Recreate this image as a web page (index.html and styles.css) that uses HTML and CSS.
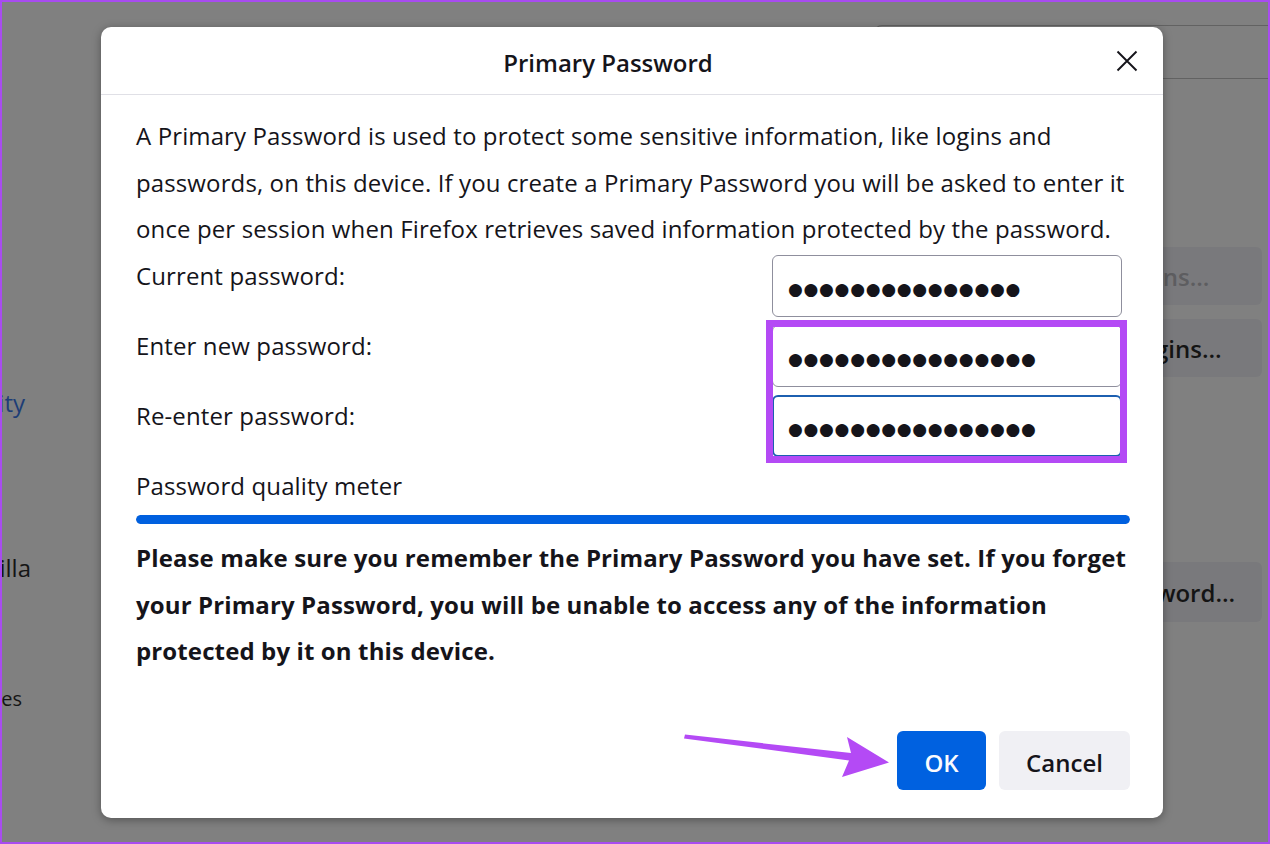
FILE: index.html
```html
<!DOCTYPE html>
<html lang="en">
<head>
<meta charset="utf-8">
<title>Primary Password</title>
<link rel="stylesheet" href="styles.css">
</head>
<body>
<div class="frame">
  <div class="page">
    <nav class="sidebar">
      <div class="nav-item nav-active">Privacy &amp; Security</div>
      <div class="nav-item nav-more">More from Mozilla</div>
      <div class="nav-item nav-footer">Extensions &amp; Themes</div>
    </nav>
    <main class="main">
      <div class="search"></div>
      <div class="btn-stack">
        <div class="bg-btn bg-btn-disabled">Exceptions…</div>
        <div class="bg-btn">Saved Logins…</div>
      </div>
      <div class="bg-btn bg-btn-wide"><span class="bg-btn-text">Change Primary Password…</span></div>
    </main>
  </div>

  <div class="dialog">
    <div class="dlg-header">
      <div class="dlg-title">Primary Password</div>
      <div class="close">
        <svg width="24" height="24" viewBox="0 0 24 24"><path d="M2.5 2.5 L21.5 21.5 M21.5 2.5 L2.5 21.5" stroke="#15141a" stroke-width="1.9" fill="none"/></svg>
      </div>
    </div>
    <div class="dlg-body">
      <p class="intro">A Primary Password is used to protect some sensitive information, like logins and passwords, on this device. If you create a Primary Password you will be asked to enter it once per session when Firefox retrieves saved information protected by the password.</p>
      <div class="fields">
        <div class="label">Current password:</div>
        <div class="field">●●●●●●●●●●●●●●●</div>
        <div class="label">Enter new password:</div>
        <div class="field">●●●●●●●●●●●●●●●●</div>
        <div class="label">Re-enter password:</div>
        <div class="field field-focus">●●●●●●●●●●●●●●●●</div>
      </div>
      <div class="label">Password quality meter</div>
      <div class="meter"><div class="meter-fill" style="width:100%"></div></div>
      <p class="warning">Please make sure you remember the Primary Password you have set. If you forget your Primary Password, you will be unable to access any of the information protected by it on this device.</p>
    </div>
    <div class="dlg-footer">
      <button class="btn btn-primary">OK</button>
      <button class="btn btn-secondary">Cancel</button>
    </div>
  </div>

  <div class="highlight"></div>
  <svg class="arrow" width="220" height="60" viewBox="680 725 220 60">
    <polygon points="685,734.6 851,753 847,737 889,762.5 842,777 849,760.5 684,738.4" fill="#b44af5"/>
  </svg>
</div>
</body>
</html>
```

FILE: styles.css
```css
html, body {
  margin: 0;
  padding: 0;
}

body {
  font-family: "Open Sans", "Noto Sans", sans-serif;
  background: #808080;
}

.frame {
  position: relative;
  width: 1270px;
  height: 844px;
  box-sizing: border-box;
  border: 2px solid #a84cf0;
  background: #808080;
  overflow: hidden;
}

.page {
  display: flex;
  height: 100%;
}

/* background sidebar (dimmed) */
.sidebar {
  width: 29px;
  overflow: hidden;
  display: flex;
  flex-direction: column;
  flex-shrink: 0;
}

.nav-item {
  display: flex;
  justify-content: flex-end;
  white-space: nowrap;
  font-size: 24px;
  line-height: 46px;
  color: #151515;
}

.nav-active {
  margin-top: 378px;
  padding-right: 6px;
  color: #1d3d76;
}

.nav-more {
  margin-top: 119px;
}

.nav-footer {
  margin-top: 93px;
  font-size: 20px;
  line-height: 30px;
  padding-right: 9px;
}

/* background main area */
.main {
  flex: 1;
  display: flex;
  flex-direction: column;
  align-items: flex-end;
}

.search {
  margin-top: 23px;
  width: 394px;
  height: 54px;
  box-sizing: border-box;
  border: 1px solid #626262;
  border-right: none;
  border-radius: 8px 0 0 8px;
}

.btn-stack {
  margin-top: 168px;
  margin-right: 6px;
  width: 250px;
  display: flex;
  flex-direction: column;
  gap: 14px;
}

.bg-btn {
  height: 58px;
  border-radius: 6px;
  background: #79797c;
  color: #141414;
  font-size: 24px;
  font-weight: 600;
  display: flex;
  align-items: center;
  justify-content: center;
  white-space: nowrap;
}

.bg-btn-disabled {
  color: #5d5d60;
}

.bg-btn-wide {
  margin-top: 185px;
  margin-right: 6px;
  height: 60px;
  width: 110px;
  overflow: hidden;
  justify-content: flex-end;
  padding-right: 27px;
}

.bg-btn-text {
  flex-shrink: 0;
}

/* dialog */
.dialog {
  position: absolute;
  left: 99px;
  top: 25px;
  width: 1062px;
  height: 791px;
  background: #fff;
  border-radius: 10px;
  box-shadow: 0 2px 10px rgba(0, 0, 0, 0.35);
  display: flex;
  flex-direction: column;
  color: #15141a;
}

.dlg-header {
  height: 68px;
  box-sizing: border-box;
  border-bottom: 1px solid #e0e0e6;
  display: flex;
  align-items: center;
  padding: 4px 24px 0 0;
}

.dlg-title {
  flex: 1;
  text-align: center;
  font-size: 24px;
  font-weight: 600;
}

.close {
  width: 24px;
  height: 24px;
  margin-bottom: 4px;
}

.close svg {
  display: block;
}

.dlg-body {
  flex: 1;
  padding: 18px 33px 0 35px;
  font-size: 24px;
  line-height: 46.5px;
  letter-spacing: 0.12px;
}

.intro,
.warning {
  margin: 0;
}

.fields {
  display: grid;
  grid-template-columns: 1fr 350px;
  grid-auto-rows: 70px;
  margin-right: 8px;
}

.field {
  box-sizing: border-box;
  height: 62px;
  margin-top: 2px;
  border: 1px solid #8f8f9d;
  border-radius: 6px;
  padding-left: 15px;
  display: flex;
  align-items: center;
  padding-top: 7px;
  font-family: "DejaVu Sans", sans-serif;
  font-size: 17px;
  letter-spacing: 0.7px;
  color: #15141a;
}

.field-focus {
  border: 2px solid #1c5fb0;
  padding-left: 14px;
}

.meter {
  margin-top: 6px;
  height: 9px;
  border-radius: 5px;
  background: #e0e0e6;
  overflow: hidden;
}

.meter-fill {
  height: 100%;
  background: #0060df;
  border-radius: 5px;
}

.warning {
  margin-top: 11px;
  font-weight: 700;
}

.dlg-footer {
  display: flex;
  justify-content: flex-end;
  gap: 13px;
  padding: 0 33px 28px 0;
}

.btn {
  height: 59px;
  border: none;
  border-radius: 6px;
  font-family: "Open Sans", "Noto Sans", sans-serif;
  font-size: 24px;
  font-weight: 600;
  padding: 3px 0 0;
}

.btn-primary {
  width: 89px;
  background: #0061e0;
  color: #fbfbfe;
}

.btn-secondary {
  width: 131px;
  background: #f0f0f4;
  color: #15141a;
}

/* annotations */
.highlight {
  position: absolute;
  left: 764px;
  top: 318px;
  width: 361px;
  height: 143px;
  box-sizing: border-box;
  border: 7px solid #b44af5;
}

.arrow {
  position: absolute;
  left: 678px;
  top: 723px;
}
```
